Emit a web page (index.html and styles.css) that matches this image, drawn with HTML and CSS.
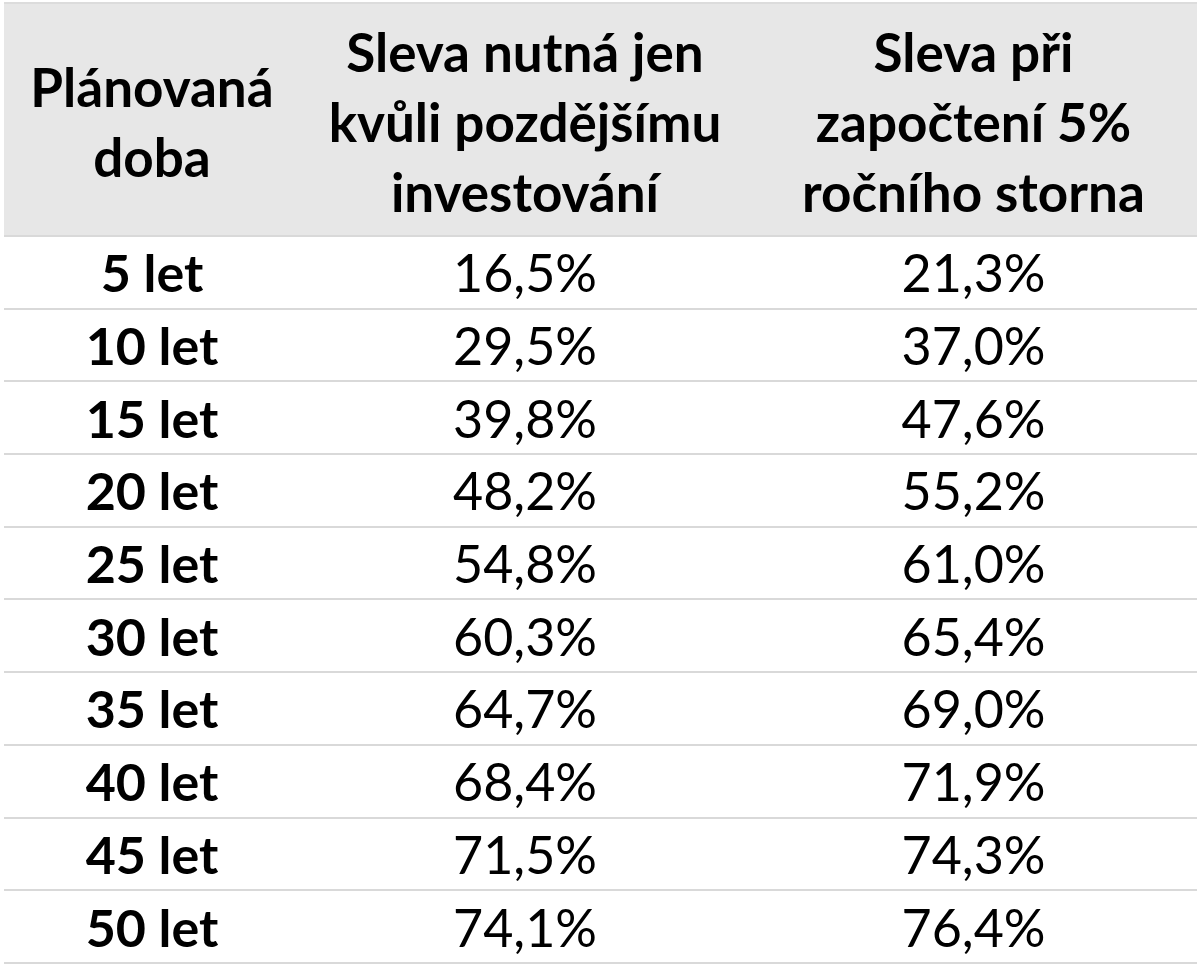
FILE: index.html
```html
<!DOCTYPE html>
<html lang="cs">
<head>
<meta charset="utf-8">
<title>Sleva</title>
<link rel="stylesheet" href="styles.css">
</head>
<body>
<div class="wrap">
<table class="tbl">
<colgroup><col class="c1"><col class="c2"><col class="c3"></colgroup>
<thead>
<tr>
<th>Plánovaná<br>doba</th>
<th>Sleva nutná jen<br>kvůli pozdějšímu<br>investování</th>
<th>Sleva při<br>započtení 5%<br>ročního storna</th>
</tr>
</thead>
<tbody>
<tr><td class="y">5 let</td><td>16,5%</td><td>21,3%</td></tr>
<tr><td class="y">10 let</td><td>29,5%</td><td>37,0%</td></tr>
<tr><td class="y">15 let</td><td>39,8%</td><td>47,6%</td></tr>
<tr><td class="y">20 let</td><td>48,2%</td><td>55,2%</td></tr>
<tr><td class="y">25 let</td><td>54,8%</td><td>61,0%</td></tr>
<tr><td class="y">30 let</td><td>60,3%</td><td>65,4%</td></tr>
<tr><td class="y">35 let</td><td>64,7%</td><td>69,0%</td></tr>
<tr><td class="y">40 let</td><td>68,4%</td><td>71,9%</td></tr>
<tr><td class="y">45 let</td><td>71,5%</td><td>74,3%</td></tr>
<tr><td class="y">50 let</td><td>74,1%</td><td>76,4%</td></tr>
</tbody>
</table>
</div>
</body>
</html>
```
FILE: styles.css
```css
html, body {
  margin: 0;
  padding: 0;
  background: #ffffff;
}
.wrap {
  padding: 2px 3px 0 4px;
}
.tbl {
  width: 1193px;
  border-collapse: collapse;
  table-layout: fixed;
  font-family: Lato, "Open Sans", sans-serif;
  color: #000;
}
.c1 { width: 296px; }
.c2 { width: 450px; }
.c3 { width: 447px; }
.tbl thead th {
  background: #e7e7e7;
  border-top: 2px solid #dcdcdc;
  font-weight: 700;
  font-size: 53px;
  line-height: 70px;
  height: 233px;
  padding: 4px 0 0 0;
  text-align: center;
  vertical-align: middle;
  box-sizing: border-box;
}
.tbl td {
  font-size: 52px;
  height: 72.7px;
  padding: 0;
  text-align: center;
  vertical-align: middle;
  border-top: 2px solid #d9d9d9;
  box-sizing: border-box;
}
.tbl tbody tr:last-child td {
  border-bottom: 2px solid #d9d9d9;
}
.tbl td.y {
  font-weight: 700;
}
```
